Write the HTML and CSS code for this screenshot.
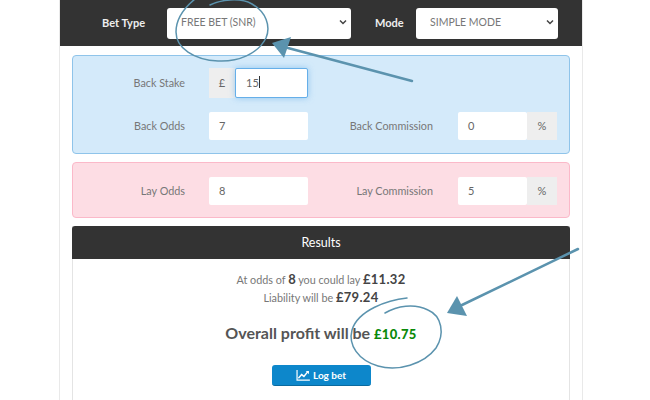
FILE: index.html
```html
<!DOCTYPE html>
<html lang="en">
<head>
    <meta charset="UTF-8">
    <title>Matched Betting Calculator</title>
    <link rel="stylesheet" href="styles.css">
</head>
<body>
    <div class="calculator">
        <div class="top-bar">
            <label class="top-label label-type">Bet Type</label>
            <div class="fake-select select-type">FREE BET (SNR)
                <svg class="chevron" width="8" height="6" viewBox="0 0 8 6"><path d="M1 1.500l3 3 3-3" fill="none" stroke="#444" stroke-width="1.500"/></svg>
            </div>
            <label class="top-label label-mode">Mode</label>
            <div class="fake-select select-mode">SIMPLE MODE
                <svg class="chevron" width="8" height="6" viewBox="0 0 8 6"><path d="M1 1.500l3 3 3-3" fill="none" stroke="#444" stroke-width="1.500"/></svg>
            </div>
        </div>

        <div class="panel panel-back">
            <div class="row">
                <span class="field-label">Back Stake</span>
                <div class="group group-left group-tall">
                    <span class="addon addon-pound">£</span>
                    <span class="input input-focus">15<i class="caret"></i></span>
                </div>
            </div>
            <div class="row">
                <span class="field-label">Back Odds</span>
                <div class="group group-left"><span class="input">7</span></div>
                <span class="field-label label-right">Back Commission</span>
                <div class="group group-right">
                    <span class="input">0</span>
                    <span class="addon addon-percent">%</span>
                </div>
            </div>
        </div>

        <div class="panel panel-lay">
            <div class="row">
                <span class="field-label">Lay Odds</span>
                <div class="group group-left"><span class="input">8</span></div>
                <span class="field-label label-right">Lay Commission</span>
                <div class="group group-right">
                    <span class="input">5</span>
                    <span class="addon addon-percent">%</span>
                </div>
            </div>
        </div>

        <div class="results">
            <div class="results-head">Results</div>
            <div class="results-body">
                <p class="line">At odds of <b>8</b> you could lay <b class="big">£11.32</b></p>
                <p class="line">Liability will be <b class="big">£79.24</b></p>
                <p class="profit">Overall profit will be <b class="green">£10.75</b></p>
                <button class="log-btn">
                    <svg width="14" height="11" viewBox="0 0 15 12"><path d="M1 0v11h14" fill="none" stroke="#fff" stroke-width="1.300"/><path d="M2.500 9l3.500-4 2.500 2 4.500-5.500" fill="none" stroke="#fff" stroke-width="1.600"/><path d="M10.500 1h3.500v3.500z" fill="#fff"/></svg>
                    Log bet
                </button>
            </div>
        </div>
    </div>

    <!-- hand drawn notes on top of the screenshot -->
    <svg class="notes" width="650" height="400" viewBox="0 0 650 400">
        <g fill="none" stroke="#5b93ae" stroke-linecap="round">
            <path d="M210 5C220 0 240 -3 252 4C266 12 271 26 266 38C258 54 238 62 218 61C194 60 176 48 176 32C176 18 184 8 195 -1" stroke-width="1.500"/>
            <path d="M412 81L288 48" stroke-width="2.500"/>
            <path d="M578 249L462 305" stroke-width="2.500"/>
            <path d="M407 298C388 300 358 310 352 330C348 345 358 360 378 366C398 372 424 364 436 348C445 334 442 316 428 310C414 303 397 306 385 313" stroke-width="1.500"/>
        </g>
        <polygon points="272,43 291,37 284,58" fill="#5b93ae"/>
        <polygon points="447,313 457,296 467,316" fill="#5b93ae"/>
    </svg>
</body>
</html>
```
FILE: styles.css
```css
* {
    margin: 0;
    padding: 0;
    box-sizing: border-box;
    font-family: 'Lato', sans-serif;
}

body {
    background-color: #fff;
    width: 650px;
    height: 400px;
    overflow: hidden;
}

.calculator {
    width: 524px;
    height: 400px;
    margin-left: 59px;
    border-left: 1px solid #e9e9e9;
    border-right: 1px solid #e9e9e9;
    overflow: hidden;
}

.top-bar {
    height: 46px;
    background-color: #333;
    display: flex;
    align-items: center;
}

.top-label {
    color: #eee;
    font-size: 11px;
    font-weight: 700;
    padding-bottom: 2px;
}

.label-type {
    margin-left: 42px;
    width: 65px;
}

.label-mode {
    margin-left: 24px;
    width: 41px;
}

.fake-select {
    height: 31px;
    background-color: #fff;
    border-radius: 3px;
    color: #777;
    font-size: 10.500px;
    display: flex;
    align-items: center;
    justify-content: space-between;
    padding: 0 4px 2px 14px;
}

.select-type {
    width: 184px;
}

.select-mode {
    width: 142px;
}

.panel {
    margin: 8px 12px 0;
    border-radius: 4px;
}

.panel-back {
    height: 99px;
    margin-top: 9px;
    padding-top: 12px;
    background-color: #d4eafa;
    border: 1px solid #8fc4ea;
}

.panel-lay {
    height: 56px;
    padding-top: 14px;
    background-color: #fddde4;
    border: 1px solid #fbb9c9;
}

.row {
    display: flex;
    align-items: center;
    margin-bottom: 14px;
}

.field-label {
    width: 112px;
    text-align: right;
    color: #777;
    font-size: 10.800px;
    padding-bottom: 2px;
}

.label-right {
    width: 125px;
}

.group {
    display: flex;
    height: 28px;
    margin-left: 24px;
}

.group-tall {
    height: 30px;
}

.group-left {
    width: 99px;
}

.group-right {
    width: 99px;
    margin-left: 25px;
}

.input {
    flex: 1;
    background-color: #fff;
    border-radius: 2px;
    color: #666;
    font-size: 11px;
    display: flex;
    align-items: center;
    padding: 0 0 2px 10px;
}

.input-focus {
    border: 1px solid #66afe9;
    box-shadow: 0 0 6px rgba(102, 175, 233, .6);
}

.caret {
    width: 1px;
    height: 12px;
    background-color: #333;
}

.addon {
    background-color: #eee;
    color: #666;
    font-size: 11px;
    display: flex;
    align-items: center;
    justify-content: center;
    padding-bottom: 2px;
}

.addon-pound {
    width: 26px;
}

.addon-percent {
    width: 30px;
}

.results {
    margin: 8px 12px 0;
    border: 1px solid #e4e4e4;
    border-top: none;
    border-bottom: none;
    height: 200px;
}

.results-head {
    height: 33px;
    margin: 0 -1px;
    background-color: #333;
    border-radius: 3px 3px 0 0;
    color: #fff;
    font-size: 12.500px;
    display: flex;
    align-items: center;
    justify-content: center;
}

.results-body {
    text-align: center;
    padding-top: 12px;
    color: #777;
}

.line {
    font-size: 10.800px;
    line-height: 17.500px;
}

.line b {
    color: #444;
    font-size: 13px;
}

.line .big {
    letter-spacing: .3px;
}

.profit {
    font-size: 16px;
    font-weight: 700;
    color: #555;
    margin-top: 15px;
    line-height: 24px;
}

.green {
    color: #0a8a0a;
    font-size: 13px;
    letter-spacing: .3px;
}

.log-btn {
    display: inline-flex;
    align-items: center;
    justify-content: center;
    gap: 3px;
    width: 99px;
    height: 21px;
    margin-top: 19px;
    background-color: #0d87cb;
    border: none;
    border-bottom: 1px solid #0a6a9f;
    border-radius: 3px;
    color: #fff;
    font-size: 10px;
    font-weight: 700;
}

.notes {
    position: absolute;
    top: 0;
    left: 0;
    pointer-events: none;
}
```
